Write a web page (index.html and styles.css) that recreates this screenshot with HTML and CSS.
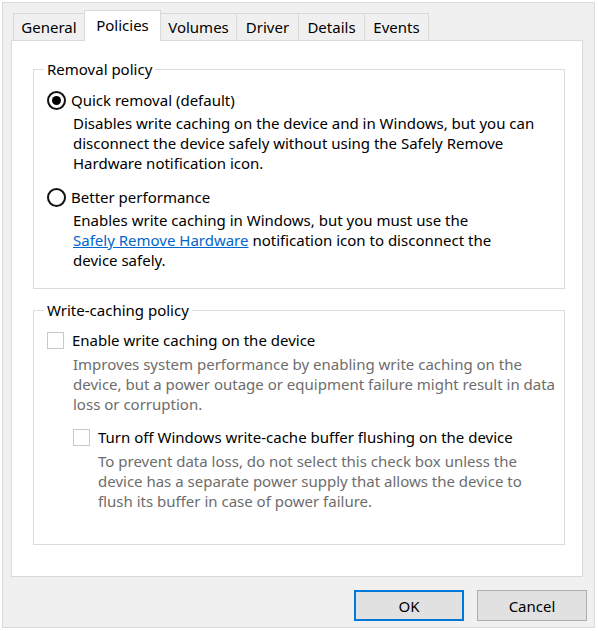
FILE: index.html
```html
<!DOCTYPE html>
<html>
<head>
<meta charset="utf-8">
<link rel="stylesheet" href="styles.css">
</head>
<body>
<div class="window">
  <div class="tabs">
    <div class="tab t-general">General</div>
    <div class="tab active t-policies">Policies</div>
    <div class="tab t-volumes">Volumes</div>
    <div class="tab t-driver">Driver</div>
    <div class="tab t-details">Details</div>
    <div class="tab last t-events">Events</div>
  </div>
  <div class="panel">
    <fieldset class="group group-removal">
      <legend>Removal policy</legend>
      <div class="option">
        <span class="radio checked"></span>
        <span class="label">Quick removal (default)</span>
      </div>
      <p class="desc">Disables write caching on the device and in Windows, but you can<br>disconnect the device safely without using the Safely Remove<br>Hardware notification icon.</p>
      <div class="option option-second">
        <span class="radio"></span>
        <span class="label">Better performance</span>
      </div>
      <p class="desc">Enables write caching in Windows, but you must use the<br><a class="link" href="#">Safely Remove Hardware</a> notification icon to disconnect the<br>device safely.</p>
    </fieldset>
    <fieldset class="group group-cache">
      <legend>Write-caching policy</legend>
      <div class="option">
        <span class="check"></span>
        <span class="label">Enable write caching on the device</span>
      </div>
      <p class="desc disabled">Improves system performance by enabling write caching on the<br>device, but a power outage or equipment failure might result in data<br>loss or corruption.</p>
      <div class="option nested">
        <span class="check"></span>
        <span class="label">Turn off Windows write-cache buffer flushing on the device</span>
      </div>
      <p class="desc disabled nested-desc">To prevent data loss, do not select this check box unless the<br>device has a separate power supply that allows the device to<br>flush its buffer in case of power failure.</p>
    </fieldset>
  </div>
  <div class="buttons">
    <button class="btn default">OK</button>
    <button class="btn">Cancel</button>
  </div>
</div>
</body>
</html>
```
FILE: styles.css
```css
html, body {
  margin: 0;
  padding: 0;
  background: #ffffff;
}
body {
  font-family: "Noto Sans", "Open Sans", sans-serif;
  font-size: 15px;
  line-height: 20px;
  color: #000;
}
.window {
  margin: 2px;
  width: 593px;
  height: 626px;
  box-sizing: border-box;
  border: 1px solid #dadada;
  background: #f0f0f0;
  padding: 7px 11px 0 8px;
}
.tabs {
  display: flex;
  align-items: flex-end;
  height: 30px;
  padding-left: 2px;
}
.tab {
  box-sizing: border-box;
  height: 27px;
  border: 1px solid #d9d9d9;
  border-right: none;
  border-bottom: none;
  background: #f0f0f0;
  text-align: center;
  line-height: 26px;
}
.tab.last { border-right: 1px solid #d9d9d9; }
.tab.active {
  height: 31px;
  background: #fff;
  margin-bottom: -1px;
  position: relative;
  z-index: 1;
  border-right: 1px solid #d9d9d9;
  margin-right: -1px;
  line-height: 28px;
}
.t-general { width: 71px; }
.t-policies { width: 77px; }
.t-volumes { width: 76px; }
.t-driver { width: 62px; }
.t-details { width: 66px; }
.t-events { width: 65px; }

.panel {
  box-sizing: border-box;
  height: 537px;
  background: #fff;
  border: 1px solid #d9d9d9;
  padding: 18px 17px 0 21px;
}
.group {
  margin: 0;
  padding: 0 0 0 13px;
  border: 1px solid #dcdcdc;
  min-width: 0;
}
.group legend {
  margin-left: -3px;
  padding: 0 3px;
  line-height: 20px;
}
.group-removal {
  height: 230px;
  box-sizing: border-box;
  padding-top: 11px;
}
.group-cache {
  margin-top: 11px;
  height: 245px;
  box-sizing: border-box;
  padding-top: 10px;
}
.option {
  display: flex;
  align-items: center;
  height: 20px;
}
.option-second { margin-top: 14px; }
.radio {
  box-sizing: border-box;
  width: 19px;
  height: 19px;
  border: 2px solid #111;
  border-radius: 50%;
  margin-right: 5px;
  display: flex;
  align-items: center;
  justify-content: center;
  flex: none;
}
.radio.checked::after {
  content: "";
  width: 9px;
  height: 9px;
  border-radius: 50%;
  background: #000;
}
.check {
  box-sizing: border-box;
  width: 17px;
  height: 17px;
  border: 1px solid #c8c8c8;
  background: #fff;
  margin-right: 8px;
  flex: none;
}
.desc {
  margin: 3px 0 0 26px;
  white-space: nowrap;
}
.desc.disabled { color: #6d6d6d; margin-top: 4px; }
.nested { margin-left: 26px; margin-top: 13px; }
.nested-desc { margin-left: 51px; }
.link {
  color: #0066cc;
  text-decoration: underline;
}
.buttons {
  display: flex;
  justify-content: flex-end;
  gap: 13px;
  margin-top: 13px;
  margin-right: -4px;
}
.btn {
  box-sizing: border-box;
  width: 110px;
  height: 31px;
  background: #e1e1e1;
  border: 1px solid #adadad;
  font-family: inherit;
  font-size: 15px;
  color: #000;
  padding: 0;
}
.btn.default {
  border: 2px solid #0078d7;
}
```
